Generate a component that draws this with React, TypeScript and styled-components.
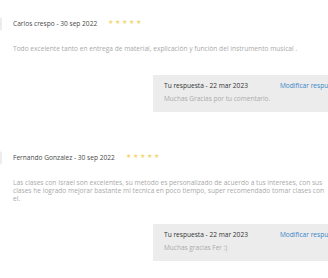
import styled, { createGlobalStyle } from 'styled-components';

const GlobalStyle = createGlobalStyle`
  html, body {
    margin: 0;
    padding: 0;
    background: #ffffff;
    overflow: hidden;
  }
  body {
    font-family: 'Open Sans', 'Liberation Sans', sans-serif;
  }
`;

const Page = styled.div`
  width: 380px;
  padding-top: 17px;
  display: flex;
  flex-direction: column;
  gap: 39px;
`;

const Review = styled.div`
  display: flex;
  align-items: flex-start;
  margin-left: -12px;
`;

const Avatar = styled.div`
  width: 14px;
  height: 14px;
  border-radius: 3px;
  background: #ececec;
  flex-shrink: 0;
`;

const Content = styled.div`
  margin-left: 11px;
  display: flex;
  flex-direction: column;
`;

const Header = styled.div`
  display: flex;
  align-items: center;
  height: 12px;
  gap: 11px;
`;

const Author = styled.span`
  font-size: 6.6px;
  color: #4a4a4a;
  white-space: nowrap;
`;

const Stars = styled.span`
  display: flex;
  gap: 2px;
  color: #f2d66e;
  font-size: 5.5px;
  line-height: 1;
`;

const Comment = styled.p`
  margin: 16px 0 0;
  width: 315px;
  font-size: 6.62px;
  line-height: 8px;
  color: #a9a9a9;
`;

const Reply = styled.div<{ $top: number }>`
  margin: ${(p) => p.$top}px 0 0 140px;
  width: 220px;
  padding: 4px 11px 7px;
  background: #ececec;
  display: flex;
  flex-direction: column;
`;

const ReplyHead = styled.div`
  display: flex;
  gap: 32px;
  height: 13px;
  align-items: center;
  white-space: nowrap;
`;

const ReplyTitle = styled.span`
  font-size: 6.6px;
  color: #333333;
`;

const EditLink = styled.a`
  font-size: 6.6px;
  color: #3b86c6;
  text-decoration: none;
`;

const ReplyText = styled.div`
  font-size: 6.5px;
  line-height: 13px;
  color: #ababab;
`;

const reviews = [
  {
    author: 'Carlos crespo - 30 sep 2022',
    text: 'Todo excelente tanto en entrega de material, explicación y función del instrumento musical .',
    reply: 'Muchas Gracias por tu comentario.',
    gap: 22,
  },
  {
    author: 'Fernando Gonzalez - 30 sep 2022',
    text: 'Las clases con Israel son excelentes, su metodo es personalizado de acuerdo a tus intereses, con sus clases he logrado mejorar bastante mi tecnica en poco tiempo, super recomendado tomar clases con el.',
    reply: 'Muchas gracias Fer :)',
    gap: 21,
  },
];

export default function App() {
  return (
    <>
      <GlobalStyle />
      <Page>
        {reviews.map((r) => (
          <Review key={r.author}>
            <Avatar />
            <Content>
              <Header>
                <Author>{r.author}</Author>
                <Stars>
                  {[0, 1, 2, 3, 4].map((i) => (
                    <span key={i}>★</span>
                  ))}
                </Stars>
              </Header>
              <Comment>{r.text}</Comment>
              <Reply $top={r.gap}>
                <ReplyHead>
                  <ReplyTitle>Tu respuesta - 22 mar 2023</ReplyTitle>
                  <EditLink href="#">Modificar respuesta</EditLink>
                </ReplyHead>
                <ReplyText>{r.reply}</ReplyText>
              </Reply>
            </Content>
          </Review>
        ))}
      </Page>
    </>
  );
}
